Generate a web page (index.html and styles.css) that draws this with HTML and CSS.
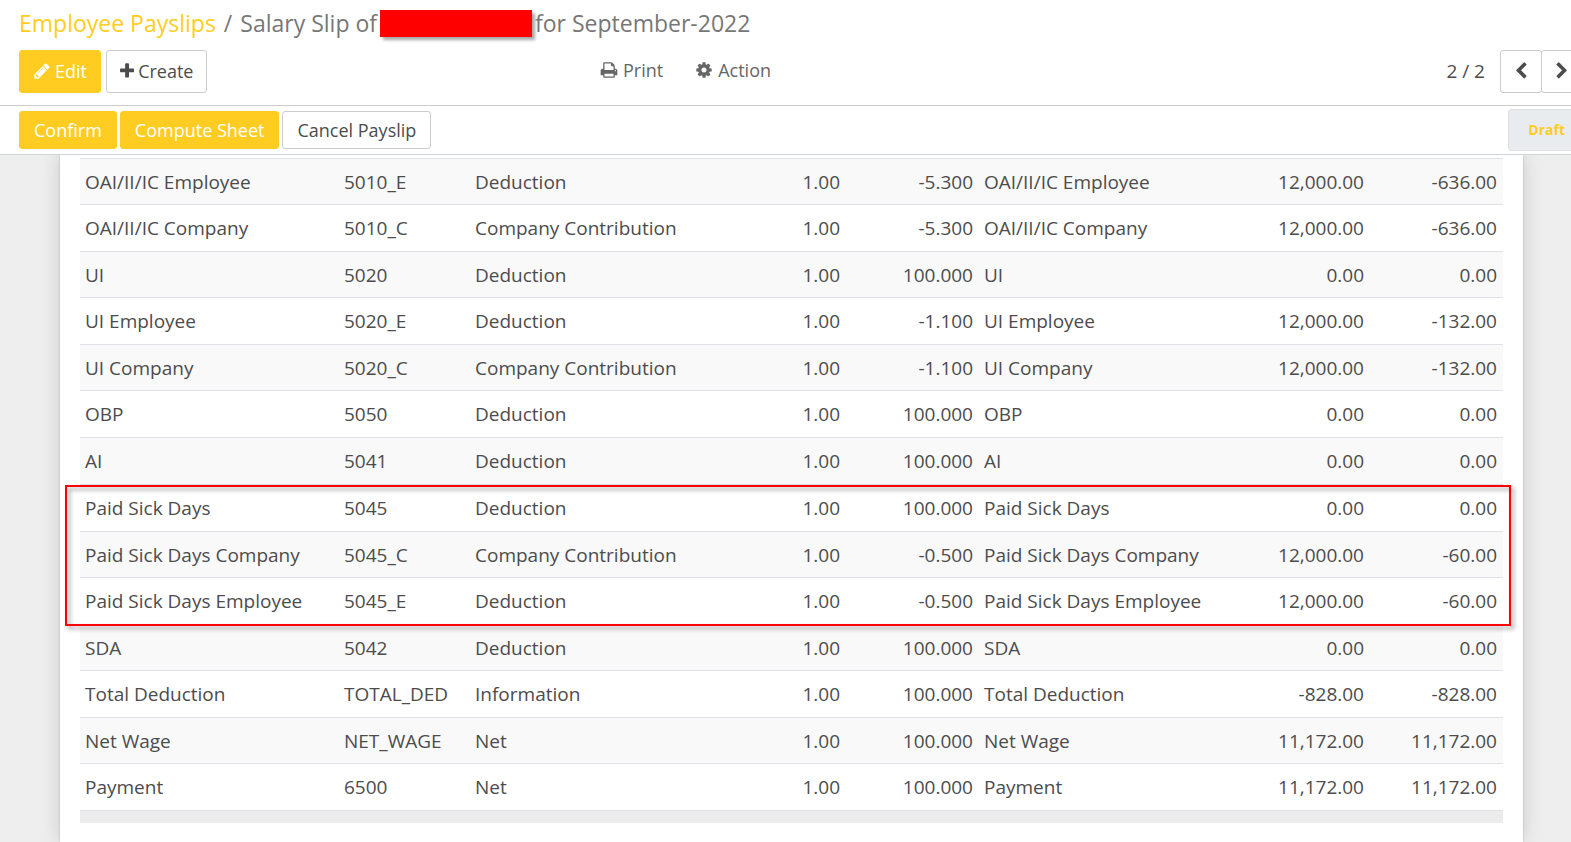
FILE: index.html
```html
<!DOCTYPE html>
<html lang="en">
<head>
<meta charset="utf-8">
<title>Employee Payslips</title>
<link rel="stylesheet" href="styles.css">
</head>
<body>
<header class="control-panel">
  <nav class="breadcrumb" aria-label="Breadcrumb">
    <a class="crumb-link" href="#">Employee Payslips</a><span class="crumb-sep">/</span><span>Salary Slip of</span><span class="redacted"></span><span>for September-2022</span>
  </nav>
  <div class="toolbar">
    <div class="group">
      <button class="btn primary tall edit" type="button"><svg class="icon" viewBox="0 0 1792 1792"><path d="M491 1536l91-91-235-235-91 91v107h128v128h107zm523-928q0-22-22-22-10 0-17 7l-542 542q-7 7-7 17 0 22 22 22 10 0 17-7l542-542q7-7 7-17zm-54-192l416 416-832 832h-416v-416zm683 96q0 53-37 90l-166 166-416-416 166-165q36-38 90-38 53 0 91 38l235 234q37 39 37 91z"/></svg>Edit</button>
      <button class="btn tall" type="button"><svg class="icon" viewBox="192 0 1408 1792"><path d="M1600 736v192q0 40-28 68t-68 28h-416v416q0 40-28 68t-68 28h-192q-40 0-68-28t-28-68v-416h-416q-40 0-68-28t-28-68v-192q0-40 28-68t68-28h416v-416q0-40 28-68t68-28h192q40 0 68 28t28 68v416h416q40 0 68 28t28 68z"/></svg>Create</button>
    </div>
    <div class="menus">
      <button class="menu" type="button"><svg class="icon" viewBox="0 0 1792 1792"><path d="M448 1536h896v-256h-896v256zm0-640h896v-384h-160q-40 0-68-28t-28-68v-160h-640v640zm1152 64q0-26-19-45t-45-19-45 19-19 45 19 45 45 19 45-19 19-45zm128 0v416q0 13-9.500 22.500t-22.500 9.500h-224v160q0 40-28 68t-68 28h-960q-40 0-68-28t-28-68v-160h-224q-13 0-22.500-9.500t-9.500-22.500v-416q0-79 56.500-135.500t135.500-56.500h64v-544q0-40 28-68t68-28h672q40 0 88 20t76 48l152 152q28 28 48 76t20 88v256h64q79 0 135.500 56.500t56.500 135.500z"/></svg>Print</button>
      <button class="menu" type="button"><svg class="icon" viewBox="0 0 1792 1792"><path d="M1152 896q0-106-75-181t-181-75-181 75-75 181 75 181 181 75 181-75 75-181zm512-109v222q0 12-8 23t-20 13l-185 28q-19 54-39 91 35 50 107 138 10 12 10 25t-9 23q-27 37-99 108t-94 71q-12 0-26-9l-138-108q-44 23-91 38-16 136-29 186-7 28-36 28h-222q-14 0-24.500-8.500t-11.500-21.500l-28-184q-49-16-90-37l-141 107q-10 9-25 9-14 0-25-11-126-114-165-168-7-10-7-23 0-12 8-23 15-21 51-66.500t54-70.500q-27-50-41-99l-183-27q-13-2-21-12.500t-8-23.500v-222q0-12 8-23t19-13l186-28q14-46 39-92-40-57-107-138-10-12-10-24 0-10 9-23 26-36 98.500-107.500t94.500-71.500q13 0 26 10l138 107q44-23 91-38 16-136 29-186 7-28 36-28h222q14 0 24.500 8.500t11.500 21.500l28 184q49 16 90 37l142-107q9-9 24-9 13 0 25 10 129 119 165 170 7 8 7 22 0 12-8 23-15 21-51 66.500t-54 70.500q26 50 41 98l183 28q13 2 21 12.500t8 23.500z"/></svg>Action</button>
    </div>
    <div class="pager">
      <span class="pager-count">2 / 2</span>
      <button class="btn tall step prev" type="button" aria-label="Previous"><svg class="icon" viewBox="0 0 1792 1792"><path d="M1427 301l-531 531 531 531q19 19 19 45t-19 45l-166 166q-19 19-45 19t-45-19l-742-742q-19-19-19-45t19-45l742-742q19-19 45-19t45 19l166 166q19 19 19 45t-19 45z"/></svg></button>
      <button class="btn tall step next" type="button" aria-label="Next"><svg class="icon" viewBox="0 0 1792 1792"><path d="M1363 877l-742 742q-19 19-45 19t-45-19l-166-166q-19-19-19-45t19-45l531-531-531-531q-19-19-19-45t19-45l166-166q19-19 45-19t45 19l742 742q19 19 19 45t-19 45z"/></svg></button>
    </div>
  </div>
</header>
<div class="statusbar">
  <button class="btn primary" type="button">Confirm</button>
  <button class="btn primary" type="button">Compute Sheet</button>
  <button class="btn" type="button">Cancel Payslip</button>
  <span class="stage">Draft</span>
</div>
<main class="form-view">
  <div class="sheet">
    <table class="lines">
      <colgroup><col class="c-name"><col class="c-code"><col class="c-category"><col class="c-qty"><col class="c-rate"><col class="c-rule"><col class="c-amount"><col class="c-total"></colgroup>
      <tbody>
        <tr><td>OAI/II/IC Employee</td><td>5010_E</td><td>Deduction</td><td class="num">1.00</td><td class="num">-5.300</td><td>OAI/II/IC Employee</td><td class="num">12,000.00</td><td class="num">-636.00</td></tr>
        <tr><td>OAI/II/IC Company</td><td>5010_C</td><td>Company Contribution</td><td class="num">1.00</td><td class="num">-5.300</td><td>OAI/II/IC Company</td><td class="num">12,000.00</td><td class="num">-636.00</td></tr>
        <tr><td>UI</td><td>5020</td><td>Deduction</td><td class="num">1.00</td><td class="num">100.000</td><td>UI</td><td class="num">0.00</td><td class="num">0.00</td></tr>
        <tr><td>UI Employee</td><td>5020_E</td><td>Deduction</td><td class="num">1.00</td><td class="num">-1.100</td><td>UI Employee</td><td class="num">12,000.00</td><td class="num">-132.00</td></tr>
        <tr><td>UI Company</td><td>5020_C</td><td>Company Contribution</td><td class="num">1.00</td><td class="num">-1.100</td><td>UI Company</td><td class="num">12,000.00</td><td class="num">-132.00</td></tr>
        <tr><td>OBP</td><td>5050</td><td>Deduction</td><td class="num">1.00</td><td class="num">100.000</td><td>OBP</td><td class="num">0.00</td><td class="num">0.00</td></tr>
        <tr><td>AI</td><td>5041</td><td>Deduction</td><td class="num">1.00</td><td class="num">100.000</td><td>AI</td><td class="num">0.00</td><td class="num">0.00</td></tr>
        <tr><td>Paid Sick Days</td><td>5045</td><td>Deduction</td><td class="num">1.00</td><td class="num">100.000</td><td>Paid Sick Days</td><td class="num">0.00</td><td class="num">0.00</td></tr>
        <tr><td>Paid Sick Days Company</td><td>5045_C</td><td>Company Contribution</td><td class="num">1.00</td><td class="num">-0.500</td><td>Paid Sick Days Company</td><td class="num">12,000.00</td><td class="num">-60.00</td></tr>
        <tr><td>Paid Sick Days Employee</td><td>5045_E</td><td>Deduction</td><td class="num">1.00</td><td class="num">-0.500</td><td>Paid Sick Days Employee</td><td class="num">12,000.00</td><td class="num">-60.00</td></tr>
        <tr><td>SDA</td><td>5042</td><td>Deduction</td><td class="num">1.00</td><td class="num">100.000</td><td>SDA</td><td class="num">0.00</td><td class="num">0.00</td></tr>
        <tr><td>Total Deduction</td><td>TOTAL_DED</td><td>Information</td><td class="num">1.00</td><td class="num">100.000</td><td>Total Deduction</td><td class="num">-828.00</td><td class="num">-828.00</td></tr>
        <tr><td>Net Wage</td><td>NET_WAGE</td><td>Net</td><td class="num">1.00</td><td class="num">100.000</td><td>Net Wage</td><td class="num">11,172.00</td><td class="num">11,172.00</td></tr>
        <tr><td>Payment</td><td>6500</td><td>Net</td><td class="num">1.00</td><td class="num">100.000</td><td>Payment</td><td class="num">11,172.00</td><td class="num">11,172.00</td></tr>
      </tbody>
    </table>
    <div class="table-foot"></div>
    <div class="highlight"></div>
  </div>
</main>
</body>
</html>
```
FILE: styles.css
```css
* { box-sizing: border-box; }

body {
  margin: 0;
  min-height: 100vh;
  display: flex;
  flex-direction: column;
  overflow: hidden;
  background: #fff;
  color: #4c4c4c;
  font-family: "Open Sans", "Noto Sans", sans-serif;
  font-size: 19px;
  line-height: 28px;
}

button { font: inherit; font-size: 18px; color: inherit; cursor: pointer; }

.icon { height: 18px; fill: currentColor; flex: none; }

.control-panel {
  padding: 4px 0 12px 19px;
  border-bottom: 1px solid #ccc;
}

.breadcrumb {
  display: flex;
  align-items: center;
  height: 38px;
  margin-bottom: 8px;
  font-size: 23px;
  color: #777;
  white-space: pre;
}
.crumb-link { color: #ffcd22; text-decoration: none; }
.crumb-sep { padding: 0 8px; }
.redacted {
  width: 152px;
  height: 27px;
  margin: 0 3px;
  background: #f00;
  box-shadow: 3px 3px 3px rgba(0, 0, 0, .35);
}

.toolbar {
  display: grid;
  grid-template-columns: 581px 1fr auto;
  align-items: center;
}
.group { display: flex; gap: 5px; }

.btn {
  display: inline-flex;
  align-items: center;
  justify-content: center;
  gap: 4px;
  height: 38px;
  padding: 0 14px;
  border: 1px solid #ccc;
  border-radius: 3px;
  background: #fff;
  white-space: nowrap;
}
.tall { height: 43px; padding: 0 13px 2px; }
.primary { background: #ffcd22; border-color: #ffcd22; color: #fff; }

.menus { display: flex; gap: 32px; padding-bottom: 3px; color: #666; }
.menu {
  display: flex;
  align-items: center;
  gap: 5px;
  padding: 0;
  border: 0;
  background: none;
}

.pager { display: flex; align-items: center; margin-right: -12px; }
.pager-count { margin-right: 15px; padding-bottom: 2px; }
.step { width: 42px; padding: 0 0 2px; }
.next { margin-left: -1px; }

.statusbar {
  display: flex;
  align-items: center;
  gap: 3px;
  height: 49px;
  padding-left: 19px;
  border-bottom: 1px solid #ced4da;
}
.stage {
  margin-left: auto;
  margin-right: -14px;
  padding: 7px 19px;
  border: 1px solid #dee2e6;
  border-radius: 3px;
  background: #e9ecef;
  color: #ffcd22;
  font-size: 14px;
  font-weight: 700;
  line-height: 26px;
}

.form-view {
  flex: 1;
  display: flex;
  padding: 0 48px 0 60px;
  overflow: hidden;
  background: #eee;
}
.sheet {
  position: relative;
  flex: 1;
  padding: 3px 20px 0;
  background: #fff;
  box-shadow: 0 0 2px rgba(0, 0, 0, .2), 0 0 20px rgba(0, 0, 0, .15);
}

.lines {
  width: 100%;
  table-layout: fixed;
  border-collapse: separate;
  border-spacing: 0;
  border-top: 1px solid #dee2e6;
}
.c-name { width: 259px; }
.c-code { width: 131px; }
.c-category { width: 270px; }
.c-qty { width: 106px; }
.c-rate { width: 133px; }
.c-rule { width: 271px; }
.c-amount { width: 120px; }
.c-total { width: 133px; }
.lines td {
  height: 46px;
  padding: 0 6px 0 5px;
  border-bottom: 1px solid #dee2e6;
  white-space: nowrap;
}
.lines tr:nth-child(even) td,
.lines tr:nth-child(7n) td { height: 47px; }
.lines tr:nth-child(odd) { background: #f9f9f9; }
.lines .num { text-align: right; }
.table-foot { height: 12px; background: #ececec; }

.highlight {
  position: absolute;
  top: 330px;
  left: 5px;
  right: 12px;
  height: 141px;
  border: 2px solid #f00;
  filter: drop-shadow(3px 3px 2px rgba(0, 0, 0, .4));
  pointer-events: none;
}
```
